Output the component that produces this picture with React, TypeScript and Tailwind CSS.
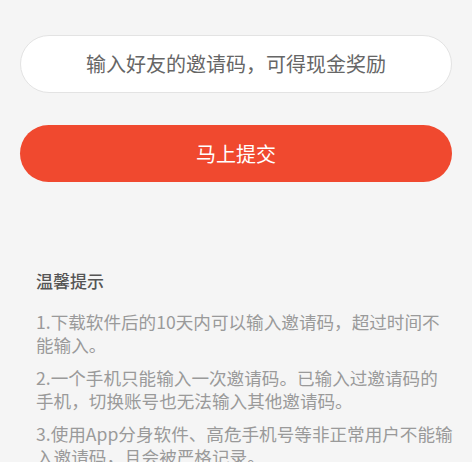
import React from "react";

export default function App() {
  const font = { fontFamily: '"Noto Sans CJK SC", "Noto Sans", sans-serif' };
  return (
    <div
      className="w-[472px] h-[462px] overflow-hidden bg-[#f5f5f5] pt-[35px] px-[20px] font-['Noto_Sans_CJK_SC',sans-serif]"
      style={font}
    >
      <div className="h-[58px] rounded-full border border-[#e3e3e3] bg-white flex items-center justify-center text-[20px] text-[#666666]">
        输入好友的邀请码，可得现金奖励
      </div>
      <button className="mt-[32px] w-full h-[57px] rounded-full bg-[#f0492f] text-white text-[20px] flex items-center justify-center">
        马上提交
      </button>
      <div className="mt-[87px] pl-[16px]">
        <div className="text-[17px] leading-[24px] text-[#555555] font-medium">温馨提示</div>
        <div className="mt-[17px] text-[17.6px] leading-[23px] text-[#9a9a9a] whitespace-nowrap flex flex-col gap-[10px]">
          <p>
            1.下载软件后的10天内可以输入邀请码，超过时间不
            <br />
            能输入。
          </p>
          <p>
            2.一个手机只能输入一次邀请码。已输入过邀请码的
            <br />
            手机，切换账号也无法输入其他邀请码。
          </p>
          <p>
            3.使用App分身软件、高危手机号等非正常用户不能输
            <br />
            入邀请码，且会被严格记录。
          </p>
        </div>
      </div>
    </div>
  );
}
